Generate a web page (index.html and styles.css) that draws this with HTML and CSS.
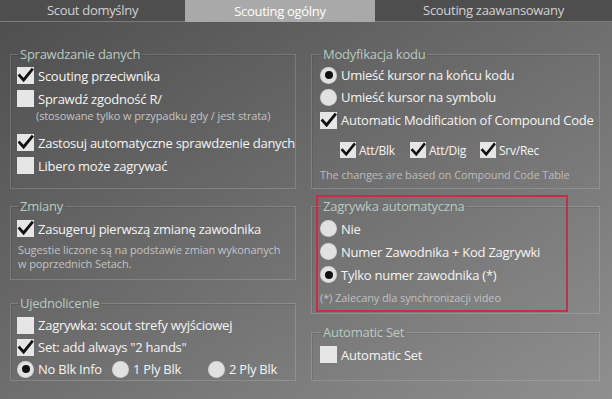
FILE: index.html
```html
<!DOCTYPE html>
<html lang="pl">
<head>
<meta charset="utf-8">
<title>Scouting ogólny</title>
<link rel="stylesheet" href="styles.css">
</head>
<body>
<div class="tabs">
  <div class="tab tab-1">Scout domyślny</div>
  <div class="tab tab-2 active">Scouting ogólny</div>
  <div class="tab tab-3">Scouting zaawansowany</div>
</div>
<main class="page">
  <div class="col col-left">
    <fieldset class="group g-data">
      <legend>Sprawdzanie danych</legend>
      <div class="row"><span class="cb checked"><svg viewBox="0 0 17 17"><path d="M2.6 8.6 L6.6 13 L15 2.6"/></svg></span>Scouting przeciwnika</div>
      <div class="row"><span class="cb"></span>Sprawdź zgodność R/</div>
      <div class="note note-strata">(stosowane tylko w przypadku gdy / jest strata)</div>
      <div class="row"><span class="cb checked"><svg viewBox="0 0 17 17"><path d="M2.6 8.6 L6.6 13 L15 2.6"/></svg></span>Zastosuj automatyczne sprawdzenie danych</div>
      <div class="row"><span class="cb"></span>Libero może zagrywać</div>
    </fieldset>

    <fieldset class="group g-changes">
      <legend>Zmiany</legend>
      <div class="row"><span class="cb checked"><svg viewBox="0 0 17 17"><path d="M2.6 8.6 L6.6 13 L15 2.6"/></svg></span>Zasugeruj pierwszą zmianę zawodnika</div>
      <div class="note note-changes">Sugestie liczone są na podstawie zmian wykonanych<br>w poprzednich Setach.</div>
    </fieldset>

    <fieldset class="group g-unify">
      <legend>Ujednolicenie</legend>
      <div class="row row-22"><span class="cb"></span>Zagrywka: scout strefy wyjściowej</div>
      <div class="row row-22"><span class="cb checked"><svg viewBox="0 0 17 17"><path d="M2.6 8.6 L6.6 13 L15 2.6"/></svg></span>Set: add always "2 hands"</div>
      <div class="row row-22 radios">
        <span class="opt opt-1"><span class="rb checked"></span>No Blk Info</span>
        <span class="opt opt-2"><span class="rb"></span>1 Ply Blk</span>
        <span class="opt"><span class="rb"></span>2 Ply Blk</span>
      </div>
    </fieldset>
  </div>

  <div class="col col-right">
    <fieldset class="group g-code">
      <legend>Modyfikacja kodu</legend>
      <div class="row row-22"><span class="rb checked"></span>Umieść kursor na końcu kodu</div>
      <div class="row row-22"><span class="rb"></span>Umieść kursor na symbolu</div>
      <div class="row row-24"><span class="cb checked"><svg viewBox="0 0 17 17"><path d="M2.6 8.6 L6.6 13 L15 2.6"/></svg></span>Automatic Modification of Compound Code</div>
      <div class="small-row">
        <span class="small-opt"><span class="cb cb-small checked"><svg viewBox="0 0 17 17"><path d="M2.6 8.6 L6.6 13 L15 2.6"/></svg></span>Att/Blk</span>
        <span class="small-opt"><span class="cb cb-small checked"><svg viewBox="0 0 17 17"><path d="M2.6 8.6 L6.6 13 L15 2.6"/></svg></span>Att/Dig</span>
        <span class="small-opt"><span class="cb cb-small checked"><svg viewBox="0 0 17 17"><path d="M2.6 8.6 L6.6 13 L15 2.6"/></svg></span>Srv/Rec</span>
      </div>
      <div class="note note-code">The changes are based on Compound Code Table</div>
    </fieldset>

    <fieldset class="group g-serve">
      <legend>Zagrywka automatyczna</legend>
      <div class="row"><span class="rb"></span>Nie</div>
      <div class="row"><span class="rb"></span>Numer Zawodnika + Kod Zagrywki</div>
      <div class="row"><span class="rb checked"></span>Tylko numer zawodnika (*)</div>
      <div class="note note-serve">(*) Zalecany dla synchronizacji video</div>
    </fieldset>

    <fieldset class="group g-set">
      <legend>Automatic Set</legend>
      <div class="row"><span class="cb"></span>Automatic Set</div>
    </fieldset>

    <div class="highlight"></div>
  </div>
</main>
</body>
</html>
```

FILE: styles.css
```css
* { box-sizing: border-box; }

html, body {
  margin: 0;
  padding: 0;
}

body {
  width: 612px;
  height: 399px;
  overflow: hidden;
  background: #505050;
  font-family: "Open Sans", "Noto Sans", sans-serif;
  font-size: 13px;
  letter-spacing: -0.25px;
  color: #f4f4f4;
}

/* ---------- tabs ---------- */
.tabs {
  display: flex;
  height: 22px;
  background: #4e4e4e;
  border-bottom: 1px solid #7c7c7c;
}

.tab {
  display: flex;
  align-items: center;
  justify-content: center;
  color: #d2d2d2;
  font-size: 13px;
  letter-spacing: -0.3px;
  padding-bottom: 1px;
}

.tab-1 { width: 185px; }
.tab-2 { width: 190px; }
.tab-3 { flex: 1; }

.tab.active {
  background: #a9a9a9;
  color: #ffffff;
  margin-bottom: -1px;
}

/* ---------- page ---------- */
.page {
  height: 377px;
  display: grid;
  grid-template-columns: 286px 289px;
  column-gap: 15px;
  align-items: start;
  padding: 24px 0 0 10px;
  background: linear-gradient(to bottom right, #4f4f4f 0%, #6b6b6b 45%, #8f8f8f 100%);
}

.col {
  display: flex;
  flex-direction: column;
}

.col-right {
  position: relative;
}

/* ---------- group boxes ---------- */
.group {
  margin: 0;
  min-width: 0;
  border: 1px solid rgba(255, 255, 255, 0.16);
  box-shadow: inset 1px 1px 0 rgba(0, 0, 0, 0.08);
  padding: 0 6px;
}

.col-right .group {
  padding-left: 8px;
  padding-right: 8px;
}

.group legend {
  padding: 0 2px;
  margin-left: 1px;
  font-size: 13px;
  line-height: 16px;
  color: #b6cbc1;
}

.g-data    { padding-top: 2px; padding-bottom: 11px; }
.g-changes { margin-top: 9px; padding-top: 3px; padding-bottom: 8px; }
.g-unify   { margin-top: 15px; padding-top: 3px; padding-bottom: 0; }

.col-right .g-code  { padding-top: 2px; padding-bottom: 6px; }
.col-right .g-serve { margin-top: 9px; padding-top: 3px; padding-bottom: 8px; }
.col-right .g-set   { margin-top: 10px; padding-top: 3px; padding-bottom: 14px; }

/* ---------- rows ---------- */
.row {
  display: flex;
  align-items: center;
  gap: 4px;
  height: 23px;
  white-space: nowrap;
}

.row-22 { height: 22px; }
.row-24 { height: 24px; }

.note {
  font-size: 11px;
  line-height: 14px;
  letter-spacing: -0.1px;
  color: #c3c3c3;
  white-space: nowrap;
}

.note-strata  { margin: -1px 0 8px 19px; }
.note-changes { margin: 3px 0 0 1px; }
.note-code    { margin-top: 8px; color: #bcbcbc; }
.note-serve   { margin-top: 5px; color: #c0c0c0; }

/* ---------- checkbox ---------- */
.cb {
  flex: none;
  width: 17px;
  height: 17px;
  background: #e6e6e6;
  display: inline-flex;
}

.cb svg {
  width: 17px;
  height: 17px;
  overflow: visible;
}

.cb path {
  fill: none;
  stroke: #111111;
  stroke-width: 2.8;
  stroke-linecap: square;
  stroke-linejoin: miter;
}

.cb-small,
.cb-small svg {
  width: 16px;
  height: 16px;
}

/* ---------- radio ---------- */
.rb {
  flex: none;
  width: 17px;
  height: 17px;
  border-radius: 50%;
  background: #e1e1e1;
  box-shadow: inset 0 0 0 1px rgba(0, 0, 0, 0.06);
  display: inline-flex;
  align-items: center;
  justify-content: center;
}

.rb.checked::after {
  content: "";
  width: 8px;
  height: 8px;
  border-radius: 50%;
  background: #111111;
}

/* radio group in Ujednolicenie */
.radios { gap: 0; }

.opt {
  display: inline-flex;
  align-items: center;
  gap: 4px;
}

.opt-1 { width: 95px; }
.opt-2 { width: 96px; }

/* small checkbox row */
.small-row {
  display: flex;
  align-items: center;
  height: 20px;
  margin-top: 8px;
  padding-left: 20px;
  font-size: 12px;
}

.small-opt {
  display: inline-flex;
  align-items: center;
  gap: 3px;
  width: 70px;
}

/* ---------- highlight overlay ---------- */
.highlight {
  position: absolute;
  left: 5px;
  top: 149px;
  width: 252px;
  height: 117px;
  border: 2px solid #c92c47;
  pointer-events: none;
}
```
